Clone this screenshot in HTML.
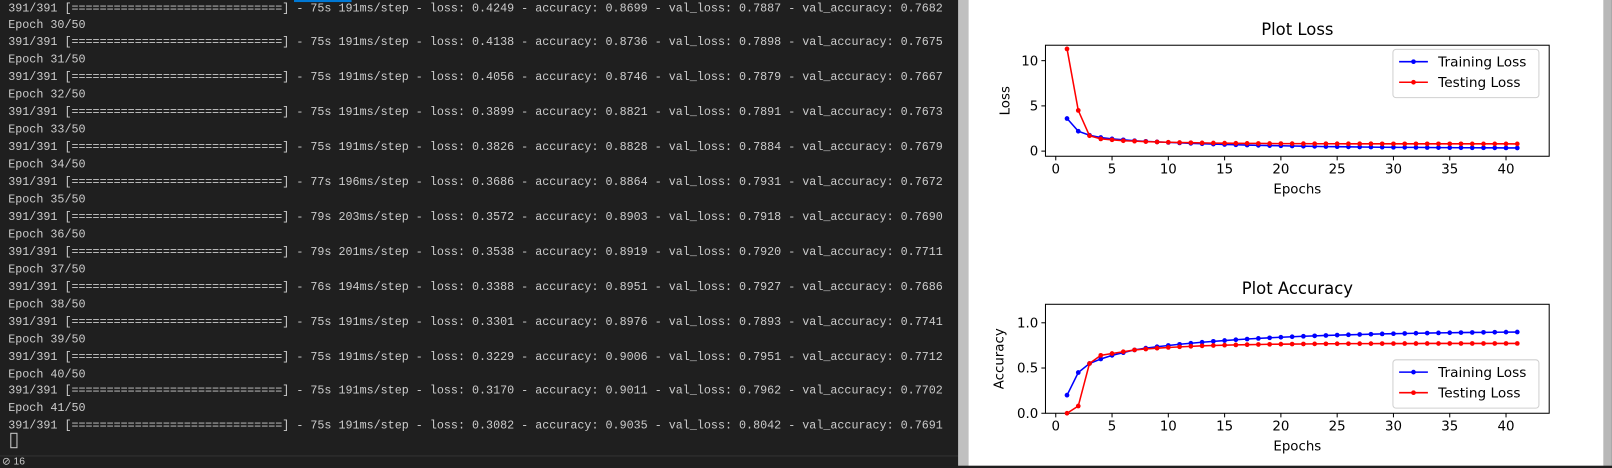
<!DOCTYPE html>
<html><head><meta charset="utf-8"><style>
*{margin:0;padding:0;box-sizing:border-box}
html,body{width:1612px;height:465px;overflow:hidden;background:#1f1f1f}
#wrap{position:absolute;left:0;top:0;width:1568px;height:453px;transform:scale(1.028);transform-origin:0 0;font-family:"Liberation Sans","DejaVu Sans",sans-serif}
#term{position:absolute;left:0;top:0;width:932px;height:453px;background:#1f1f1f}
#term pre{position:absolute;left:8px;top:0.5px;font-family:"Liberation Mono","DejaVu Sans Mono",monospace;font-size:11.4px;line-height:16.95px;color:#cccccc;white-space:pre}
#tab{position:absolute;left:286px;top:0;width:56px;height:2px;background:#0078d4}
#cursor{position:absolute;left:10px;top:421px;width:7px;height:15px;border:1px solid #ccc}
#sep{position:absolute;left:0;top:443px;width:932px;height:1px;background:#333}
#stat{position:absolute;left:2px;top:444px;color:#ccc;font-size:10px}
#gbar{position:absolute;left:932px;top:0;width:10px;height:453px;background:#c0c0c0}
#panel{position:absolute;left:942px;top:0;width:618px;height:453px;background:#fff}
#rbar{position:absolute;left:1560px;top:0;width:8px;height:453px;background:#b8b8b8}
svg text{font-family:"DejaVu Sans",sans-serif;fill:#000}
</style></head><body><div id="wrap">
<div id="term"><div id="tab"></div>
<pre>391/391 [==============================] - 75s 191ms/step - loss: 0.4249 - accuracy: 0.8699 - val_loss: 0.7887 - val_accuracy: 0.7682
Epoch 30/50
391/391 [==============================] - 75s 191ms/step - loss: 0.4138 - accuracy: 0.8736 - val_loss: 0.7898 - val_accuracy: 0.7675
Epoch 31/50
391/391 [==============================] - 75s 191ms/step - loss: 0.4056 - accuracy: 0.8746 - val_loss: 0.7879 - val_accuracy: 0.7667
Epoch 32/50
391/391 [==============================] - 75s 191ms/step - loss: 0.3899 - accuracy: 0.8821 - val_loss: 0.7891 - val_accuracy: 0.7673
Epoch 33/50
391/391 [==============================] - 75s 191ms/step - loss: 0.3826 - accuracy: 0.8828 - val_loss: 0.7884 - val_accuracy: 0.7679
Epoch 34/50
391/391 [==============================] - 77s 196ms/step - loss: 0.3686 - accuracy: 0.8864 - val_loss: 0.7931 - val_accuracy: 0.7672
Epoch 35/50
391/391 [==============================] - 79s 203ms/step - loss: 0.3572 - accuracy: 0.8903 - val_loss: 0.7918 - val_accuracy: 0.7690
Epoch 36/50
391/391 [==============================] - 79s 201ms/step - loss: 0.3538 - accuracy: 0.8919 - val_loss: 0.7920 - val_accuracy: 0.7711
Epoch 37/50
391/391 [==============================] - 76s 194ms/step - loss: 0.3388 - accuracy: 0.8951 - val_loss: 0.7927 - val_accuracy: 0.7686
Epoch 38/50
391/391 [==============================] - 75s 191ms/step - loss: 0.3301 - accuracy: 0.8976 - val_loss: 0.7893 - val_accuracy: 0.7741
Epoch 39/50
391/391 [==============================] - 75s 191ms/step - loss: 0.3229 - accuracy: 0.9006 - val_loss: 0.7951 - val_accuracy: 0.7712
Epoch 40/50
391/391 [==============================] - 75s 191ms/step - loss: 0.3170 - accuracy: 0.9011 - val_loss: 0.7962 - val_accuracy: 0.7702
Epoch 41/50
391/391 [==============================] - 75s 191ms/step - loss: 0.3082 - accuracy: 0.9035 - val_loss: 0.8042 - val_accuracy: 0.7691</pre>
<div id="cursor"></div><div id="sep"></div><div id="stat">⊘ 16</div>
</div>
<div id="gbar"></div>
<div id="panel"></div>
<div id="rbar"></div>
<svg id="plot" width="1568" height="453" style="position:absolute;left:0;top:0"></svg>
</div>
<script>
var s='';
function X(e){return 1027+e*10.95;}
function axes(top,bot,yt,ymap,title,ylab,ylx,vals){
  s+='<text x="1262" y="'+(top-10)+'" font-size="16" text-anchor="middle">'+title+'</text>';
  s+='<rect x="1017" y="'+top+'" width="490" height="'+(bot-top)+'" fill="none" stroke="#000" stroke-width="1"/>';
  for(var t=0;t<=40;t+=5){var x=X(t);s+='<line x1="'+x+'" y1="'+bot+'" x2="'+x+'" y2="'+(bot+4)+'" stroke="#000"/><text x="'+x+'" y="'+(bot+17)+'" font-size="13" text-anchor="middle">'+t+'</text>';}
  yt.forEach(function(v){var y=ymap(v[0]);s+='<line x1="1013" y1="'+y+'" x2="1017" y2="'+y+'" stroke="#000"/><text x="1010" y="'+(y+4.5)+'" font-size="13" text-anchor="end">'+v[1]+'</text>';});
  s+='<text x="1262" y="'+(bot+36)+'" font-size="13" text-anchor="middle">Epochs</text>';
  s+='<text transform="translate('+ylx+','+((top+bot)/2)+') rotate(-90)" font-size="13" text-anchor="middle">'+ylab+'</text>';
  vals.forEach(function(d){var p=d[0].map(function(v,i){return X(i+1).toFixed(1)+','+ymap(v).toFixed(1);}).join(' ');
    s+='<polyline points="'+p+'" fill="none" stroke="'+d[1]+'" stroke-width="1.5"/>';
    d[0].forEach(function(v,i){s+='<circle cx="'+X(i+1)+'" cy="'+ymap(v)+'" r="2.3" fill="'+d[1]+'"/>';});});
}
function gen(f){var a=[];for(var i=1;i<=41;i++)a.push(f(i));return a;}
var trL=gen(function(i){var b=[3.6,2.2,1.75,1.5,1.35,1.25,1.15,1.08];return i<=8?b[i-1]:0.3+0.78*Math.exp(-(i-8)/12);});
var teL=gen(function(i){var b=[11.3,4.5,1.7,1.35,1.25,1.15,1.1,1.05];return i<=8?b[i-1]:0.8+0.25*Math.exp(-(i-8)/6);});
var trA=gen(function(i){var b=[0.2,0.45,0.55,0.6,0.64,0.67,0.7,0.72];return i<=8?b[i-1]:0.91-0.19*Math.exp(-(i-8)/12);});
var teA=gen(function(i){var b=[0.0,0.08,0.55,0.64,0.66,0.68,0.70,0.71];return i<=8?b[i-1]:0.772-0.062*Math.exp(-(i-8)/6);});
var lm=function(v){return 147-v*8.8;};
axes(44,152,[[0,'0'],[5,'5'],[10,'10']],lm,'Plot Loss','Loss',982,[[trL,'#0000ff'],[teL,'#ff0000']]);
var am=function(v){return 402-v*88;};
axes(296,402,[[0,'0.0'],[0.5,'0.5'],[1,'1.0']],am,'Plot Accuracy','Accuracy',976,[[trA,'#0000ff'],[teA,'#ff0000']]);
function legend(y){
  s+='<rect x="1355" y="'+y+'" width="142" height="47" rx="3" fill="#fff" fill-opacity="0.85" stroke="#d0d0d0"/>';
  s+='<line x1="1361" y1="'+(y+12)+'" x2="1389" y2="'+(y+12)+'" stroke="#0000ff" stroke-width="1.5"/><circle cx="1375" cy="'+(y+12)+'" r="2.3" fill="#0000ff"/>';
  s+='<text x="1399" y="'+(y+16.5)+'" font-size="13.3">Training Loss</text>';
  s+='<line x1="1361" y1="'+(y+32)+'" x2="1389" y2="'+(y+32)+'" stroke="#ff0000" stroke-width="1.5"/><circle cx="1375" cy="'+(y+32)+'" r="2.3" fill="#ff0000"/>';
  s+='<text x="1399" y="'+(y+36.5)+'" font-size="13.3">Testing Loss</text>';
}
legend(48);legend(350);
document.getElementById('plot').innerHTML=s;
</script>
</body></html>
